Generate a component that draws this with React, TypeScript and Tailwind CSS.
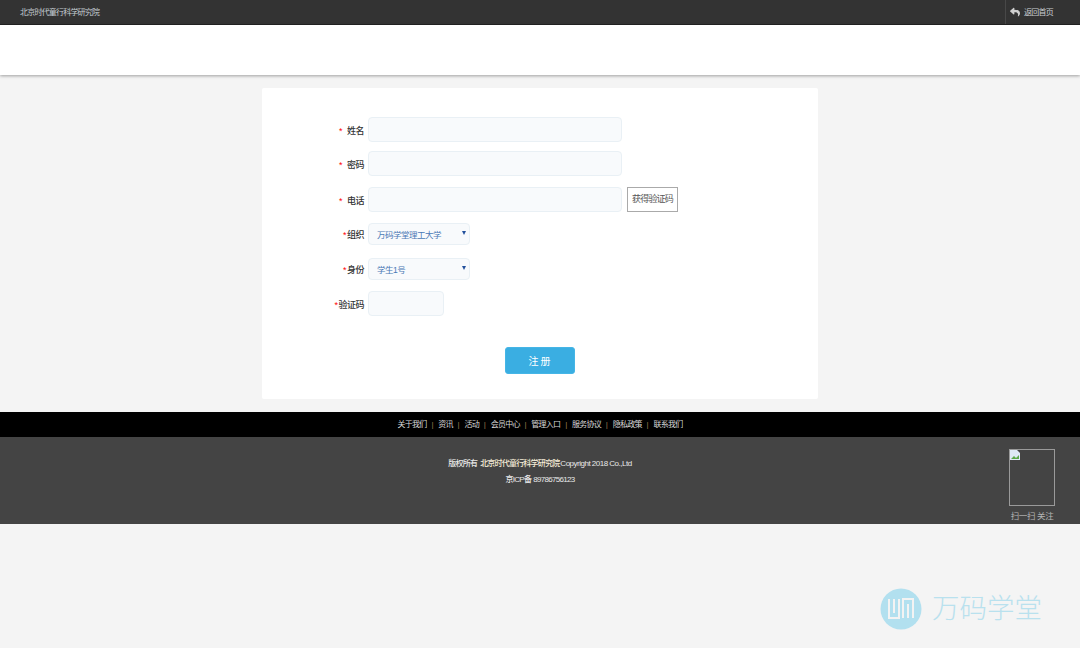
import React from "react";
import { FaReply } from "react-icons/fa";

const cjk = "font-['Liberation_Sans','Noto_Sans_CJK_SC',sans-serif]";

const navLinks = ["关于我们", "资讯", "活动", "会员中心", "管理入口", "服务协议", "隐私政策", "联系我们"];

const Label = ({ text, wide }: { text: string; wide?: boolean }) => (
  <label className="flex w-[106px] shrink-0 items-center justify-end pr-[4px] pt-[4px] text-[9px] font-medium tracking-[-0.5px] text-[#333]">
    <span className={wide ? "mr-[1px] text-[#f00]" : "mr-[4px] text-[#f00]"}>*</span>
    <span className={wide ? "" : "ml-[1px]"}>{text}</span>
  </label>
);

const TextBox = ({ className }: { className: string }) => (
  <div className={`rounded-[4px] border border-[#e9f0f5] bg-[#f8fafc] ${className}`}></div>
);

const Select = ({ text }: { text: string }) => (
  <div className="relative h-[22px] w-[102px] rounded-[4px] border border-[#e9f0f5] bg-[#f8fafc] pl-[8px] text-[8.5px] leading-[23px] tracking-[-0.5px] text-[#4a78b5]">
    {text}
    <span className="absolute right-[3px] top-[7px] h-0 w-0 border-x-[2px] border-t-[4px] border-x-transparent border-t-[#23509c]"></span>
  </div>
);

const LogoMark = () => (
  <svg width="42" height="42" viewBox="0 0 42 42">
    <circle cx="21" cy="21" r="20.5" fill="#b2e0ef" />
    <g fill="none" stroke="#f3f3f3" strokeWidth="2">
      <path d="M9 11v19h10V11" />
      <path d="M14 11v14" />
      <path d="M23 30V11h10v19" />
      <path d="M28 16v14" />
    </g>
  </svg>
);

export default function App() {
  return (
    <div className={`relative min-h-[648px] bg-[#f4f4f4] ${cjk}`}>
      <div className="flex h-[25px] items-center justify-between border-b border-[#222] bg-[#333333]">
        <span className="pl-[20px] pt-[2px] text-[8px] tracking-[-0.8px] text-[#c4ccd2]">北京时代童行科学研究院</span>
        <div className="flex h-full w-[75px] items-center border-l border-[#484848] pl-[4px] text-[8px] tracking-[-0.75px] text-[#c9ced2]">
          <FaReply size={10} className="mr-[4px] text-[#cfcfcf]" />
          <span className="pt-[2px]">返回首页</span>
        </div>
      </div>
      <div className="h-[50px] bg-white shadow-[0_1px_3px_rgba(0,0,0,0.35)]"></div>

      <main className="mx-auto mt-[13px] h-[311px] w-[556px] rounded-[2px] bg-white pt-[29px]">
        <div className="flex items-center">
          <Label text="姓名" />
          <TextBox className="h-[25px] w-[254px]" />
        </div>
        <div className="mt-[9px] flex items-center">
          <Label text="密码" />
          <TextBox className="h-[25px] w-[254px]" />
        </div>
        <div className="mt-[11px] flex items-center">
          <Label text="电话" />
          <TextBox className="h-[25px] w-[254px]" />
          <button className="ml-[5px] h-[25px] w-[51px] border border-[#aaa] bg-white pt-[1px] text-[9px] tracking-[-0.8px] text-[#555]">
            获得验证码
          </button>
        </div>
        <div className="mt-[11px] flex items-center">
          <Label text="组织" wide />
          <Select text="万码学堂理工大学" />
        </div>
        <div className="mt-[13px] flex items-center">
          <Label text="身份" wide />
          <Select text="学生1号" />
        </div>
        <div className="mt-[11px] flex items-center">
          <Label text="验证码" wide />
          <TextBox className="h-[25px] w-[76px]" />
        </div>
        <div className="mt-[31px] flex justify-center">
          <button className="h-[27px] w-[70px] rounded-[3px] border border-[#45b5e6] bg-[#3aaee2] pl-[1px] pt-[1px] text-[10px] tracking-[2px] text-white">
            注册
          </button>
        </div>
      </main>

      <footer className="mt-[13px]">
        <div className="flex h-[25px] items-center justify-center bg-black text-[8px] tracking-[-0.75px] text-[#d8d8d8]">
          {navLinks.map((link, i) => (
            <React.Fragment key={link}>
              {i > 0 && <span className="w-[11.7px] text-center tracking-normal text-[#9a7f50]">|</span>}
              <a>{link}</a>
            </React.Fragment>
          ))}
        </div>
        <div className="relative h-[87px] bg-[#444444] pt-[20px] text-center text-[8px] font-medium text-[#e8e8e8]">
          <p className="flex justify-center leading-[14px]">
            <span className="tracking-[-0.8px]">版权所有</span>
            <span className="ml-[3px] tracking-[-0.8px] text-[#f5ecd8]">北京时代童行科学研究院</span>
            <span className="ml-[1px] tracking-[-0.5px]">Copyright 2018 Co.,Ltd</span>
          </p>
          <p className="mt-[2px] flex justify-center leading-[14px]">
            <span className="tracking-[-0.7px]">京ICP备</span>
            <span className="ml-[2px] tracking-[-0.7px]">89786756123</span>
          </p>
          <div className="absolute right-[25px] top-[12px] w-[46px]">
            <div className="h-[57px] border border-[#9a9a9a]">
              <svg width="10" height="10" viewBox="0 0 10 10">
                <path d="M0 0h7l3 3v7H0z" fill="#dfe8f5" />
                <path d="M1 9l3-3 2 2 3-3v4z" fill="#5da84a" />
              </svg>
            </div>
            <p className="mt-[4px] whitespace-nowrap text-center text-[8.5px] font-normal tracking-[-0.4px] text-[#b5b5b5]">扫一扫 关注</p>
          </div>
        </div>
      </footer>

      <div className="absolute left-[880px] top-[587px] flex items-center">
        <LogoMark />
        <span className="ml-[10px] pt-[1px] text-[27.5px] font-light leading-[42px] text-[#b9e1ee]">万码学堂</span>
      </div>
    </div>
  );
}
